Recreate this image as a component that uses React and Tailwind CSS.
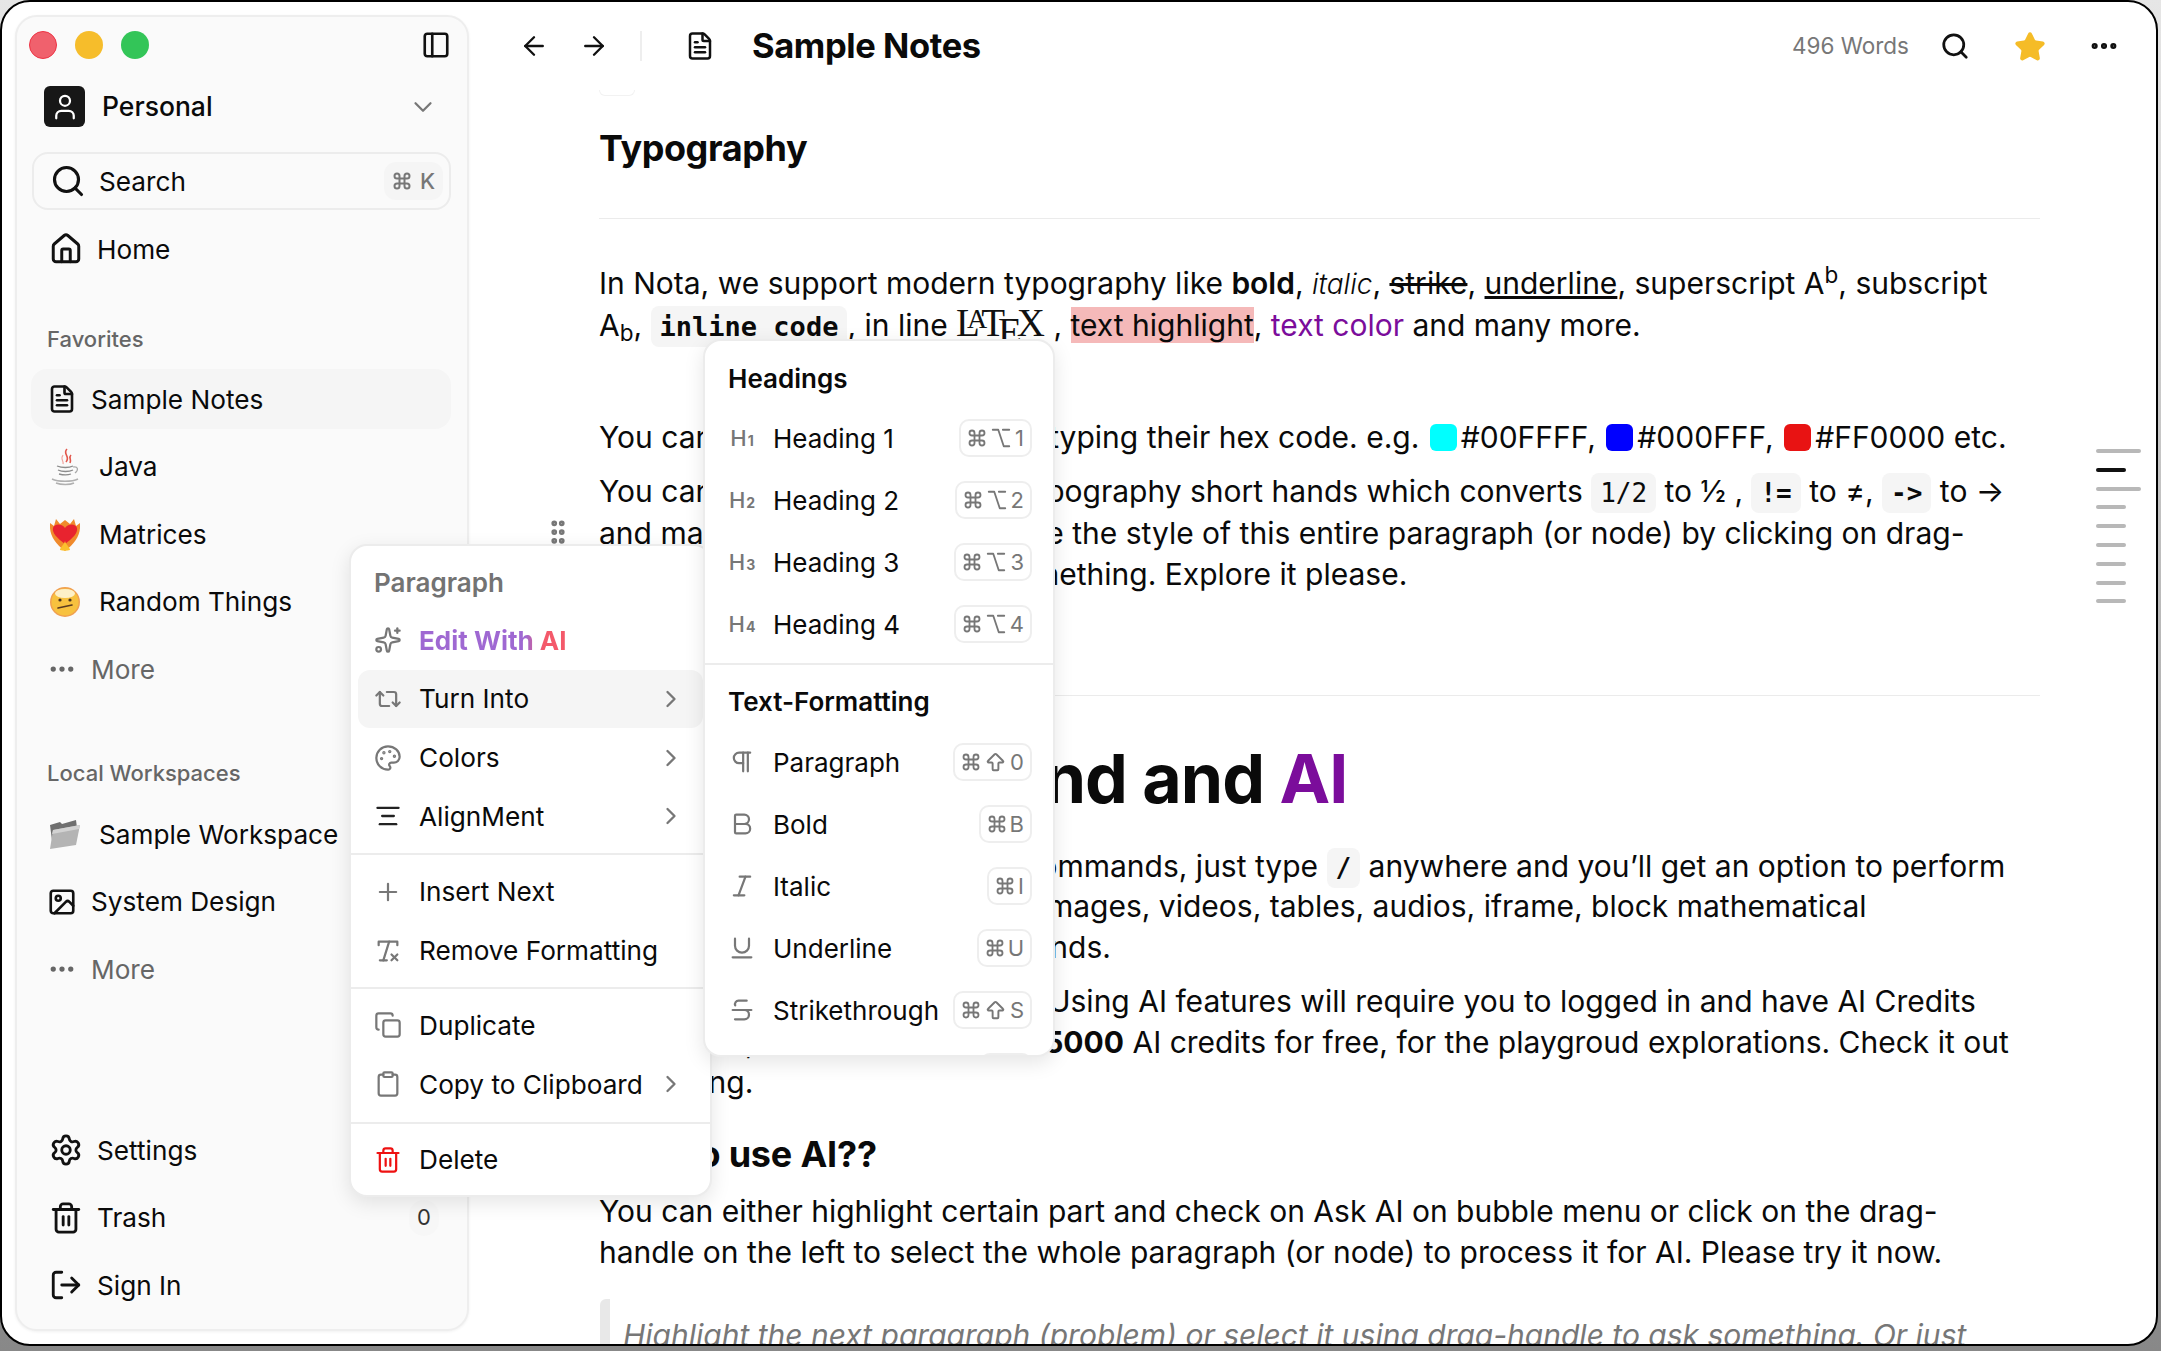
import React from "react";
import {
  PanelLeft, ChevronDown, Search, House, FileText, Ellipsis, Settings, Trash2, LogOut, User,
  ArrowLeft, ArrowRight, Star, Sparkles, Repeat2, Palette, AlignCenter, Plus, RemoveFormatting,
  Copy, Clipboard, ChevronRight, Pilcrow, Bold, Italic, Underline, Strikethrough, Command, Option,
  ArrowBigUp, GripVertical, Image, Code,
} from "lucide-react";

const Java = () => (
  <svg width="30" height="38" viewBox="0 0 30 38" fill="none">
    <path d="M17 1c-5 5 4 7-1 13M21 7c-3 3 1 4-1 8" stroke="#e2574c" strokeWidth="1.6" />
    <path d="M13 7c-3 4 1 6 0 9" stroke="#f0a5a0" strokeWidth="1.2" />
    <path d="M7 18c5 2 12 2 16 0M8 22c4 2 11 2 15 0M9 26c4 1 9 1 12 0" stroke="#8c8c8c" strokeWidth="1.3" />
    <path d="M23 19c5-1 6 3 2 6" stroke="#a8a8a8" strokeWidth="1.2" />
    <path d="M2 31c6 3 20 3 26 0M6 35c5 2 14 2 18 0" stroke="#b0b0b0" strokeWidth="1.4" />
  </svg>
);
const FireHeart = () => (
  <svg width="30" height="34" viewBox="0 0 30 34">
    <path d="M0 6l4 3 2-7 4 5 5-4 5 4 4-5 2 7 4-3c1 11-4 20-15 28C4 26-1 17 0 6z" fill="#f08a2c" />
    <path d="M15 27C7 21 2 16 3 11c1-4 8-5 12 0 4-5 11-4 12 0 1 5-4 10-12 16z" fill="#e8232f" />
    <path d="M10 33c0-3 4-5 5-9 1 4 5 6 5 9-3 1-7 1-10 0z" fill="#fbc02d" />
  </svg>
);
const Face = () => (
  <svg width="30" height="30" viewBox="0 0 30 30">
    <circle cx="15" cy="15" r="15" fill="#f0a050" />
    <circle cx="15" cy="15" r="13.5" fill="#f7c13f" />
    <ellipse cx="15" cy="6.5" rx="10" ry="4.5" fill="#fdf0c8" />
    <circle cx="10" cy="13" r="1.6" fill="#4a3420" />
    <circle cx="20" cy="13" r="1.6" fill="#4a3420" />
    <path d="M8 21l14-3" stroke="#5a3a20" strokeWidth="1.6" strokeLinecap="round" />
  </svg>
);
const Folder = () => (
  <svg width="32" height="30" viewBox="0 0 32 30">
    <path d="M1 6l10-3 2 2 14-4 1 8L4 29z" fill="#6f6f6f" />
    <path d="M4 11l27-5-4 20L1 30z" fill="#b4b4b4" />
    <path d="M4 11l27-5-1 4L3 15z" fill="#d2d2d2" />
  </svg>
);

const Row = ({ cls, box = "w-[34px]", icon, children, active, right, muted }) => (
  <div className={`flex items-center h-[60px] ml-[14px] mr-[16px] rounded-2xl shrink-0 ${cls} ${active ? "bg-[#f5f5f5]" : ""}`}>
    <span className={`flex items-center justify-center shrink-0 ${box}`}>{icon}</span>
    <span className={`pt-[1px] text-[26.2px] whitespace-nowrap ${muted ? "text-[#666666]" : "text-[#0a0a0a]"}`}>{children}</span>
    {right}
  </div>
);

const DOC = "pl-[14px] gap-[12px]";
const SYS = "pl-[18px] gap-[14px]";
const EMO = "pl-[17px] gap-[17px]";

function Sidebar() {
  return (
    <aside className="flex flex-col w-[454px] shrink-0 ml-[13px] my-[13px] bg-[#fafafa] border-2 border-[#eeeeee] rounded-[22px] shadow-[0_1px_3px_rgba(0,0,0,0.06)]">
      <div className="flex items-center mt-[14px] pl-[12px] pr-[16px] h-[28px]">
        <span className="w-[28px] h-[28px] rounded-full bg-[#f0616d] border border-[#ee3344]" />
        <span className="w-[28px] h-[28px] rounded-full bg-[#f6bd2b] ml-[18px]" />
        <span className="w-[28px] h-[28px] rounded-full bg-[#33c558] ml-[18px]" />
        <PanelLeft size={30} strokeWidth={2.1} className="ml-auto text-[#111111]" />
      </div>
      <div className="flex items-center mt-[27px] pl-[27px] pr-[29px]">
        <span className="flex items-center justify-center w-[41px] h-[41px] rounded-md bg-[#171717]">
          <User size={30} strokeWidth={1.8} className="text-white" />
        </span>
        <span className="ml-[17px] text-[26.5px] font-medium text-[#0a0a0a]">Personal</span>
        <ChevronDown size={30} strokeWidth={1.8} className="ml-auto text-[#777777]" />
      </div>
      <div className="flex items-center h-[58px] mt-[25px] mx-[15px] w-[419px] pl-[16px] pr-[6px] border-2 border-[#ececec] rounded-2xl">
        <Search size={36} strokeWidth={2.1} className="text-[#111111] shrink-0" />
        <span className="ml-[13px] pt-[1px] text-[26.2px] text-[#0a0a0a]">Search</span>
        <span className="ml-auto flex items-center gap-[8px] h-[38px] px-[8px] rounded-xl bg-[#f5f5f5] text-[22px] font-medium text-[#777777]">
          <Command size={20} strokeWidth={2.4} />K
        </span>
      </div>
      <div className="mt-[9px]">
        <Row cls={SYS} icon={<House size={34} strokeWidth={2.1} className="text-[#111111]" />}>Home</Row>
      </div>
      <div className="h-[30px] mt-[45px] pl-[30px] text-[22px] leading-[30px] font-medium text-[#666666]">Favorites</div>
      <div className="flex flex-col gap-[7.5px] mt-[15px]">
        <Row active cls={DOC} icon={<FileText size={30} strokeWidth={2.1} className="text-[#111111]" />}>Sample Notes</Row>
        <Row cls={EMO} icon={<Java />}>Java</Row>
        <Row cls={EMO} icon={<FireHeart />}>Matrices</Row>
        <Row cls={EMO} icon={<Face />}>Random Things</Row>
        <Row muted cls={DOC} icon={<Ellipsis size={30} strokeWidth={2.2} className="text-[#666666]" />}>More</Row>
      </div>
      <div className="h-[30px] mt-[59px] pl-[30px] text-[22px] leading-[30px] font-medium text-[#666666]">Local Workspaces</div>
      <div className="flex flex-col gap-[7.5px] mt-[16px]">
        <Row cls={EMO} icon={<Folder />}>Sample Workspace</Row>
        <Row cls={DOC} icon={<Image size={30} strokeWidth={2.1} className="text-[#111111]" />}>System Design</Row>
        <Row muted cls={DOC} icon={<Ellipsis size={30} strokeWidth={2.2} className="text-[#666666]" />}>More</Row>
      </div>
      <div className="flex flex-col gap-[7.5px] mt-auto mb-[14px]">
        <Row cls={SYS} icon={<Settings size={34} strokeWidth={2} className="text-[#111111]" />}>Settings</Row>
        <Row
          cls={SYS}
          icon={<Trash2 size={34} strokeWidth={2} className="text-[#111111]" />}
          right={<span className="ml-auto mr-[12px] flex items-center justify-center w-[30px] h-[36px] rounded-full bg-[#f7f7f7] text-[22px] text-[#333333]">0</span>}
        >
          Trash
        </Row>
        <Row cls={SYS} icon={<LogOut size={34} strokeWidth={2} className="text-[#111111]" />}>Sign In</Row>
      </div>
    </aside>
  );
}

const Mono = ({ children, bold, big }) => (
  <span className={`py-[5px] px-[9px] rounded-lg bg-[#f5f5f5] leading-none [font-family:'DejaVu_Sans_Mono',monospace] ${big ? "text-[27px]" : "text-[26px]"} ${bold ? "font-bold" : ""}`}>
    {children}
  </span>
);

const Swatch = ({ cls }) => <span className={`inline-block w-[27px] h-[27px] ml-[2px] mr-[4px] rounded-md align-[-3px] ${cls}`} />;

const Latex = () => (
  <span className="[font-family:'Liberation_Serif',serif] text-[39px] leading-[0] text-[#111111]">
    L<span className="text-[28px] relative -top-[8px] -ml-[13px]">A</span>
    <span className="-ml-[6px]">T</span>
    <span className="relative top-[9px] -ml-[7px]">E</span>
    <span className="-ml-[5px]">X</span>
  </span>
);

function Content() {
  return (
    <div className="pl-[130px] w-[1571px] text-[30px] leading-[40.5px] text-[#0a0a0a] whitespace-nowrap">
      <div className="w-[36px] h-[6px] border-x border-b border-[#f2f2f2] rounded-b-lg" />
      <h2 className="mt-[28px] h-[48px] text-[36px] leading-[48px] font-bold tracking-[-0.4px]">Typography</h2>
      <div className="mt-[46px] h-px bg-[#ebebeb]" />
      <p className="mt-[44px]">
        In Nota, we support modern typography like <b className="font-semibold">bold</b>, <i className="text-[28px] font-light">italic</i>, <s>strike</s>, <u>underline</u>, superscript A<sup>b</sup>, subscript
        <br />
        A<sub>b</sub>, <Mono bold big>inline code</Mono>, in line <Latex /> , <mark className="bg-[#f5b9b9] text-[#0a0a0a]">text highlight</mark>, <span className="text-[#7b0d9b]">text color</span> and many more.
      </p>
      <p className="mt-[71.5px]">
        You can also preview colors <span className="ml-[2px]">by</span> typing their hex code. e.g. <Swatch cls="bg-[#00ffff]" />#00FFFF, <Swatch cls="bg-[#0000ff]" />#000FFF, <Swatch cls="bg-[#e81313]" />#FF0000 etc.
      </p>
      <div className="mt-[13px]">
        <p className="leading-[43px]">
          You can also use all <span className="ml-[4px]">different</span> typography short hands which converts <Mono>1/2</Mono> to ½ , <Mono bold>!=</Mono> to ≠, <Mono bold>-&gt;</Mono> to →
        </p>
        <p>
          and many more. You can change the style of this entire paragraph (or node) by clicking on drag-
          <br />
          <span className="-mr-[4px]">handle on the left and doing</span> something. Explore it please.
        </p>
      </div>
      <div className="mt-[101px] h-px bg-[#ebebeb]" />
      <h1 className="mt-[42px] h-[80px] text-[68px] leading-[80px] font-bold tracking-[-0.9px]">
        Slash Command and <span className="text-[#7b0d9b]">AI</span>
      </h1>
      <p className="mt-[27.5px]">
        In Nota, we also have slash <span className="ml-[30px]">commands</span>, just type <Mono bold>/</Mono> anywhere and you’ll get an option to perform
        <br />
        actions like inserting <span className="ml-[29px]">various</span> images, videos, tables, audios, iframe, block mathematical
        <br />
        equations and few <span className="-ml-[5px]">other</span> commands.
      </p>
      <p className="mt-[14px]">
        <span className="font-semibold">Note:</span> <span className="-mr-[15px]">Please take note here that</span> Using AI features will require you to logged in and have AI Credits
        <br />
        In this trial, we will hand out <b className="font-bold ml-[44px]">5000</b> AI credits for free, for the playgroud explorations. Check it out
        <br />
        by signing.
      </p>
      <h2 className="mt-[27.5px] h-[48px] text-[36px] leading-[48px] font-bold tracking-[-0.2px]">How to use AI??</h2>
      <p className="mt-[13px]">
        You can either highlight certain part and check on Ask AI on bubble menu or click on the drag-
        <br />
        handle on the left to select the whole paragraph (or node) to process it for AI. Please try it now.
      </p>
      <div className="mt-[26.5px] ml-[1px] pl-[13px] pt-[16.5px] border-l-[10px] border-[#e8e8e8] rounded-t-md italic text-[#777777]">
        Highlight the next paragraph (problem) or select it using drag-handle to ask something. Or just
      </div>
    </div>
  );
}

const MItem = ({ icon, children, active, arrow }) => (
  <div className={`flex items-center h-[58.7px] mx-[7px] pl-[16px] pr-[18px] rounded-xl ${active ? "bg-[#f5f5f5]" : ""}`}>
    <span className="flex items-center justify-center w-[28px] text-[#777777] shrink-0">{icon}</span>
    <span className="ml-[17px] whitespace-nowrap text-[#0a0a0a]">{children}</span>
    {arrow && <ChevronRight size={28} strokeWidth={2} className="ml-auto text-[#777777]" />}
  </div>
);

function MenuOne() {
  return (
    <div className="absolute left-[349px] top-[544px] w-[363px] h-[653px] bg-white border-2 border-[#ececec] rounded-[18px] shadow-[0_6px_20px_rgba(0,0,0,0.10)] text-[26.2px] z-10">
      <div className="pb-[7px] border-b-2 border-[#ececec]">
        <div className="h-[30px] mt-[22px] mb-[13px] pl-[23px] text-[26px] leading-[30px] font-semibold text-[#737373]">Paragraph</div>
        <MItem icon={<Sparkles size={30} strokeWidth={1.9} />}>
          <span className="font-bold text-[26px] bg-[linear-gradient(90deg,#9f68d2_0%,#9f68d2_72%,#f4596a_84%,#f4596a_100%)] bg-clip-text text-transparent">Edit With AI</span>
        </MItem>
        <MItem active arrow icon={<Repeat2 size={30} strokeWidth={1.9} />}>Turn Into</MItem>
        <MItem arrow icon={<Palette size={30} strokeWidth={1.9} />}>Colors</MItem>
        <MItem arrow icon={<AlignCenter size={30} strokeWidth={2} className="text-[#222222]" />}>AlignMent</MItem>
      </div>
      <div className="pt-[8px] pb-[7px] border-b-2 border-[#ececec]">
        <MItem icon={<Plus size={30} strokeWidth={1.9} />}>Insert Next</MItem>
        <MItem icon={<RemoveFormatting size={30} strokeWidth={1.9} />}>Remove Formatting</MItem>
      </div>
      <div className="pt-[7px] pb-[8px] border-b-2 border-[#ececec]">
        <MItem icon={<Copy size={30} strokeWidth={1.9} />}>Duplicate</MItem>
        <MItem arrow icon={<Clipboard size={30} strokeWidth={1.9} />}>Copy to Clipboard</MItem>
      </div>
      <div className="pt-[7px]">
        <MItem icon={<Trash2 size={30} strokeWidth={1.9} className="text-[#ee1111]" />}>Delete</MItem>
      </div>
    </div>
  );
}

const Kbd = ({ keys }) => (
  <span className="ml-auto flex items-center gap-[3px] h-[38px] px-[6px] border-2 border-[#eeeeee] rounded-[10px] text-[22px] text-[#777777]">
    {keys.map((k, i) =>
      k === "cmd" ? <Command key={i} size={20} strokeWidth={2.2} /> :
      k === "opt" ? <Option key={i} size={22} strokeWidth={2} /> :
      k === "shift" ? <ArrowBigUp key={i} size={23} strokeWidth={2} /> :
      <span key={i}>{k}</span>
    )}
  </span>
);

const SItem = ({ icon, children, keys }) => (
  <div className="flex items-center h-[62px] pl-[23px] pr-[21px]">
    <span className="flex items-center justify-center w-[28px] text-[#777777] shrink-0">{icon}</span>
    <span className="ml-[17px] text-[26px] text-[#0a0a0a] whitespace-nowrap">{children}</span>
    <Kbd keys={keys} />
  </div>
);

const H = ({ n }) => (
  <span className="flex items-baseline text-[#777777] font-medium">
    <span className="text-[22px]">H</span>
    <span className="text-[14px] font-bold ml-[1px]">{n}</span>
  </span>
);

function MenuTwo() {
  return (
    <div className="absolute left-[703px] top-[339px] w-[352px] h-[718px] overflow-hidden bg-white border-2 border-[#ececec] rounded-[18px] shadow-[0_6px_20px_rgba(0,0,0,0.10)] z-20">
      <div className="pt-[23px] pb-[8px] border-b-2 border-[#ececec]">
        <div className="h-[30px] mb-[13px] pl-[23px] text-[26px] leading-[30px] font-semibold text-[#0a0a0a]">Headings</div>
        <SItem icon={<H n="1" />} keys={["cmd", "opt", "1"]}>Heading 1</SItem>
        <SItem icon={<H n="2" />} keys={["cmd", "opt", "2"]}>Heading 2</SItem>
        <SItem icon={<H n="3" />} keys={["cmd", "opt", "3"]}>Heading 3</SItem>
        <SItem icon={<H n="4" />} keys={["cmd", "opt", "4"]}>Heading 4</SItem>
      </div>
      <div className="pt-[22px]">
        <div className="h-[30px] mb-[14px] pl-[23px] text-[26px] leading-[30px] font-semibold text-[#0a0a0a]">Text-Formatting</div>
        <SItem icon={<Pilcrow size={28} strokeWidth={1.9} />} keys={["cmd", "shift", "0"]}>Paragraph</SItem>
        <SItem icon={<Bold size={28} strokeWidth={1.9} />} keys={["cmd", "B"]}>Bold</SItem>
        <SItem icon={<Italic size={28} strokeWidth={1.9} />} keys={["cmd", "I"]}>Italic</SItem>
        <SItem icon={<Underline size={28} strokeWidth={1.9} />} keys={["cmd", "U"]}>Underline</SItem>
        <SItem icon={<Strikethrough size={28} strokeWidth={1.9} />} keys={["cmd", "shift", "S"]}>Strikethrough</SItem>
        <SItem icon={<Code size={28} strokeWidth={1.9} />} keys={["cmd", "E"]}>Code</SItem>
      </div>
    </div>
  );
}

const TICKS = ["long", "dark", "long", "s", "s", "s", "s", "s", "s"];

export default function App() {
  return (
    <div className="relative w-[2161px] h-[1351px] overflow-hidden bg-linear-to-b from-[#e6e6e6] to-[#888888] [font-family:Inter,'Noto_Sans',sans-serif]">
      <div className="flex w-[2158px] h-[1346px] overflow-hidden bg-white border-2 border-black rounded-[30px]">
        <Sidebar />
        <main className="flex-1 min-w-0 h-full overflow-hidden">
          <header className="flex items-center h-[88px] pl-[50px] pr-[36px]">
            <ArrowLeft size={30} strokeWidth={1.9} className="text-[#111111]" />
            <ArrowRight size={30} strokeWidth={1.9} className="ml-[30px] text-[#111111]" />
            <span className="w-[2px] h-[30px] ml-[31px] bg-[#eeeeee]" />
            <FileText size={30} strokeWidth={2} className="ml-[43px] text-[#111111]" />
            <span className="ml-[37px] text-[34.5px] font-bold tracking-[-0.4px] text-[#0a0a0a]">Sample Notes</span>
            <span className="ml-auto text-[22.5px] text-[#777777]">496 Words</span>
            <Search size={30} strokeWidth={2.2} className="ml-[31px] text-[#111111]" />
            <Star size={32} fill="#f5bc27" strokeWidth={2} className="ml-[44px] mt-[2px] text-[#f5bc27]" />
            <Ellipsis size={32} strokeWidth={2.6} className="ml-[42px] text-[#111111]" />
          </header>
          <Content />
        </main>
      </div>
      <GripVertical size={30} strokeWidth={2.6} className="absolute left-[543px] top-[517px] text-[#777777]" />
      <div className="absolute left-[2096px] top-[449px] flex flex-col gap-[14.8px]">
        {TICKS.map((t, i) => (
          <span
            key={i}
            className={`block h-[4px] rounded-full ${t === "long" ? "w-[45px] bg-[#b8b8b8]" : t === "dark" ? "w-[30px] bg-[#111111]" : "w-[30px] bg-[#b8b8b8]"}`}
          />
        ))}
      </div>
      <MenuOne />
      <MenuTwo />
    </div>
  );
}
